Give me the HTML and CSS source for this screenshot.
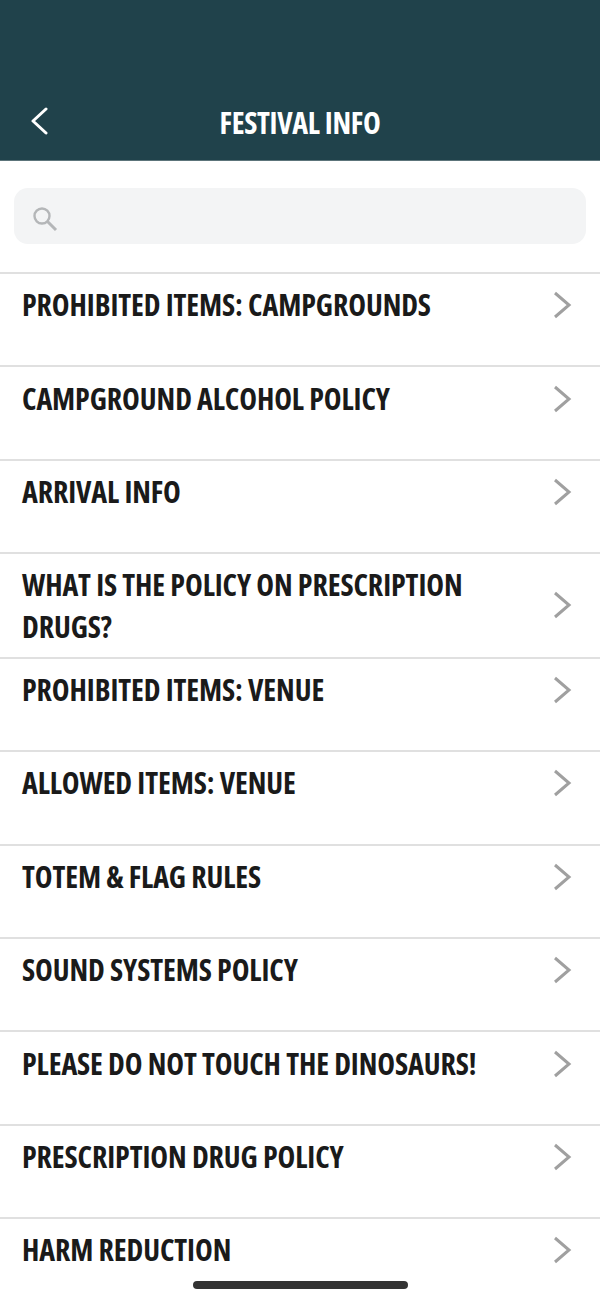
FILE: index.html

```html
<!DOCTYPE html>
<html lang="en">
<head>
  <meta charset="UTF-8">
  <title>Festival Info</title>
  <meta name="viewport" content="width=device-width, initial-scale=1.0"/>
  <link rel="stylesheet" href="styles.css">
</head>
<body>

<header class="topbar">
  <a class="back" href="#">
    <svg width="18" height="28" viewBox="0 0 18 28"><path d="M16 2 L3 14 L16 26" fill="none" stroke="#fff" stroke-width="3" stroke-linecap="round" stroke-linejoin="round"/></svg>
  </a>
  <h1>FESTIVAL INFO</h1>
</header>

<div class="search-wrap">
  <div class="search">
    <svg width="26" height="26" viewBox="0 0 26 26"><circle cx="10" cy="10" r="7.5" fill="none" stroke="#b4b6b8" stroke-width="2.4"/><path d="M15.5 15.5 L24 24" stroke="#b4b6b8" stroke-width="3"/></svg>
  </div>
</div>

<ul class="list">
  <li class="row"><span>PROHIBITED ITEMS: CAMPGROUNDS</span><svg class="chev" width="20" height="28" viewBox="0 0 20 28"><path d="M3 2 L17 14 L3 26" fill="none" stroke="#a0a0a0" stroke-width="3"/></svg></li>
  <li class="row"><span>CAMPGROUND ALCOHOL POLICY</span><svg class="chev" width="20" height="28" viewBox="0 0 20 28"><path d="M3 2 L17 14 L3 26" fill="none" stroke="#a0a0a0" stroke-width="3"/></svg></li>
  <li class="row"><span>ARRIVAL INFO</span><svg class="chev" width="20" height="28" viewBox="0 0 20 28"><path d="M3 2 L17 14 L3 26" fill="none" stroke="#a0a0a0" stroke-width="3"/></svg></li>
  <li class="row tall"><span>WHAT IS THE POLICY ON PRESCRIPTION DRUGS?</span><svg class="chev" width="20" height="28" viewBox="0 0 20 28"><path d="M3 2 L17 14 L3 26" fill="none" stroke="#a0a0a0" stroke-width="3"/></svg></li>
  <li class="row"><span>PROHIBITED ITEMS: VENUE</span><svg class="chev" width="20" height="28" viewBox="0 0 20 28"><path d="M3 2 L17 14 L3 26" fill="none" stroke="#a0a0a0" stroke-width="3"/></svg></li>
  <li class="row"><span>ALLOWED ITEMS: VENUE</span><svg class="chev" width="20" height="28" viewBox="0 0 20 28"><path d="M3 2 L17 14 L3 26" fill="none" stroke="#a0a0a0" stroke-width="3"/></svg></li>
  <li class="row"><span>TOTEM &amp; FLAG RULES</span><svg class="chev" width="20" height="28" viewBox="0 0 20 28"><path d="M3 2 L17 14 L3 26" fill="none" stroke="#a0a0a0" stroke-width="3"/></svg></li>
  <li class="row"><span>SOUND SYSTEMS POLICY</span><svg class="chev" width="20" height="28" viewBox="0 0 20 28"><path d="M3 2 L17 14 L3 26" fill="none" stroke="#a0a0a0" stroke-width="3"/></svg></li>
  <li class="row"><span>PLEASE DO NOT TOUCH THE DINOSAURS!</span><svg class="chev" width="20" height="28" viewBox="0 0 20 28"><path d="M3 2 L17 14 L3 26" fill="none" stroke="#a0a0a0" stroke-width="3"/></svg></li>
  <li class="row"><span>PRESCRIPTION DRUG POLICY</span><svg class="chev" width="20" height="28" viewBox="0 0 20 28"><path d="M3 2 L17 14 L3 26" fill="none" stroke="#a0a0a0" stroke-width="3"/></svg></li>
  <li class="row"><span>HARM REDUCTION</span><svg class="chev" width="20" height="28" viewBox="0 0 20 28"><path d="M3 2 L17 14 L3 26" fill="none" stroke="#a0a0a0" stroke-width="3"/></svg></li>
</ul>

<div class="home-bar"></div>

</body>
</html>
```

FILE: styles.css

```css
html, body {
  margin: 0;
  padding: 0;
  height: 1300px;
  overflow: hidden;
  background-color: #fff;
  font-family: 'Open Sans', 'Liberation Sans', sans-serif;
  font-stretch: 75%;
  color: #1a1a1a;
}
.topbar {
  background-color: #20424b;
  height: 161px;
  box-sizing: border-box;
  padding: 0 29px 17px 30px;
  display: flex;
  align-items: flex-end;
  border-bottom: 1px solid #5c747a;
}
.topbar h1 {
  margin: 0;
  flex: 1;
  text-align: center;
  color: #fff;
  font-size: 30px;
  line-height: 40px;
  font-weight: 700;
  letter-spacing: -0.3px;
  padding-right: 19px;
}
.back {
  display: flex;
  height: 40px;
  align-items: center;
  margin-bottom: 2px;
}
.search-wrap {
  padding: 27px 14px 28px;
}
.search {
  height: 56px;
  background-color: #f3f4f5;
  border-radius: 14px;
  padding: 18px 0 0 18px;
  box-sizing: border-box;
}
.search svg {
  display: block;
}
.list {
  list-style: none;
  margin: 0;
  padding: 0;
}
.row {
  height: 93.4px;
  box-sizing: border-box;
  border-top: 2px solid #e0e0e0;
  padding: 10.3px 28px 0 22px;
  display: flex;
  justify-content: space-between;
  align-items: flex-start;
  font-size: 30px;
  line-height: 42px;
  font-weight: 700;
  letter-spacing: -0.1px;
}
.row span {
  max-width: 480px;
}
.chev {
  flex: none;
  margin-top: 7px;
}
.tall {
  height: 104.6px;
}
.tall .chev {
  margin-top: 27px;
}
.home-bar {
  position: absolute;
  left: 193px;
  top: 1281px;
  width: 215px;
  height: 8px;
  border-radius: 4px;
  background-color: #333;
}
```
